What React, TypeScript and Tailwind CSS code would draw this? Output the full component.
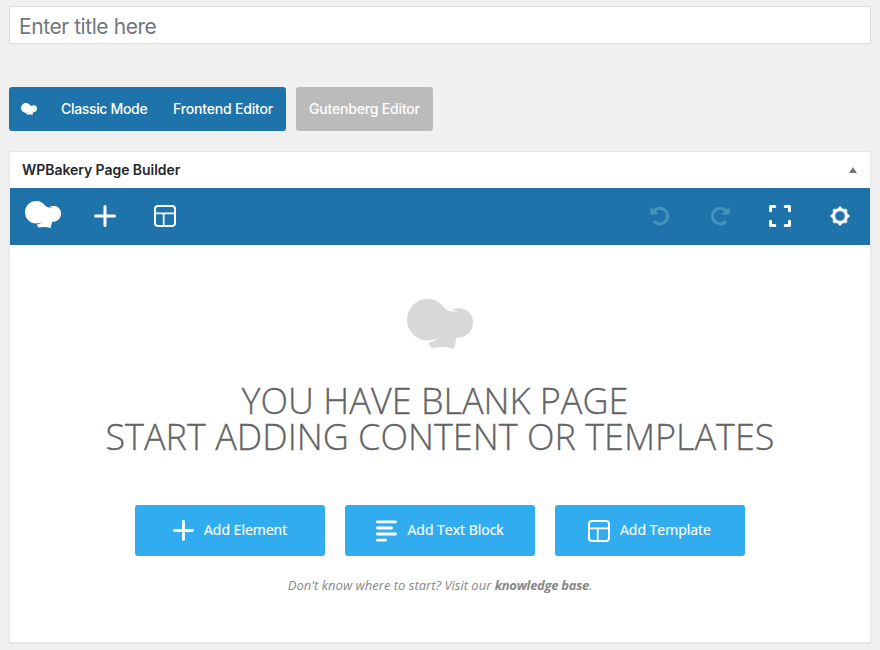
import React from "react";

type IconProps = { className?: string };

function Logo({ className }: IconProps) {
  return (
    <svg viewBox="50 41 198 149" preserveAspectRatio="none" fill="currentColor" className={className}>
      <path d="M50 103A62 62 0 0 1 112 41C135 41 149 52 158 63C166 73 176 80 204 78C198 75 191 74 182 74C194 69 206 68 213 69C234 71 248 89 248 111C248 137 228 157 199 156L191 190C169 183 149 183 126 187C121 183 117 178 114 172C126 169 138 164 147 156C136 162 124 165 112 165A62 62 0 0 1 50 103Z" />
    </svg>
  );
}

function Plus({ className }: IconProps) {
  return (
    <svg viewBox="0 0 22 22" stroke="currentColor" strokeWidth="3" strokeLinecap="round" className={className}>
      <path d="M11 1.5V20.5M1.5 11H20.5" />
    </svg>
  );
}

function Template({ className }: IconProps) {
  return (
    <svg viewBox="0 0 22 22" fill="none" stroke="currentColor" strokeWidth="2" className={className}>
      <rect x="1" y="1" width="20" height="20" rx="3" />
      <path d="M1 8.3H21M9.7 8.3V21" strokeWidth="1.7" />
    </svg>
  );
}

function TextLines({ className }: IconProps) {
  return (
    <svg viewBox="0 0 21 22" stroke="currentColor" strokeWidth="2.8" strokeLinecap="round" className={className}>
      <path d="M1.4 1.8H19.6M1.4 8H15.6M1.4 14H19.6M1.4 20.1H9.6" />
    </svg>
  );
}

function Undo({ className }: IconProps) {
  return (
    <svg viewBox="0 0 20 20" fill="none" className={className}>
      <path d="M4.3 4.6A7.8 7.8 0 1 1 4.8 16.1" stroke="currentColor" strokeWidth="3" strokeLinecap="round" />
      <path d="M1 2.2V7.8H7.4Z" fill="currentColor" stroke="currentColor" strokeWidth="1.2" strokeLinejoin="round" />
    </svg>
  );
}

function Fullscreen({ className }: IconProps) {
  return (
    <svg viewBox="0 0 22 22" fill="none" stroke="currentColor" strokeWidth="3" strokeLinecap="round" strokeLinejoin="round" className={className}>
      <path d="M1.5 5.8V1.5H5.8M16.2 1.5H20.5V5.8M20.5 16.2V20.5H16.2M5.8 20.5H1.5V16.2" />
    </svg>
  );
}

function Gear({ className }: IconProps) {
  return (
    <svg viewBox="0 0 20 20" fill="currentColor" className={className}>
      <path
        fillRule="evenodd"
        stroke="currentColor"
        strokeWidth=".8"
        strokeLinejoin="round"
        d="M10 .5L12.8 3.2L16.6 3.4L16.8 7.2L19.5 10L16.8 12.8L16.6 16.6L12.8 16.8L10 19.5L7.2 16.8L3.4 16.6L3.2 12.8L.5 10L3.2 7.2L3.4 3.4L7.2 3.2ZM10 4.7A5.3 5.3 0 1 0 10 15.3A5.3 5.3 0 0 0 10 4.7Z"
      />
    </svg>
  );
}

function ActionButton({ icon, children, className }: { icon: React.ReactNode; children: React.ReactNode; className: string }) {
  return (
    <button className={`flex h-[51px] w-[190px] items-center rounded-[3px] bg-[#31adef] text-[14px] text-white [-webkit-text-stroke:0.2px] ${className}`}>
      {icon}
      <span className="-mt-0.5 whitespace-nowrap">{children}</span>
    </button>
  );
}

export default function App() {
  return (
    <div className="h-[650px] w-[880px] overflow-hidden bg-[#f0f0f0] px-[9px] pt-1.5 font-['Inter',sans-serif]">
      <div className="flex h-[38px] w-[862px] items-center border border-[#dddddd] bg-white pt-[3px] pl-[9px] text-[21px] tracking-[-0.43px] text-[#72777c]">
        <span>Enter title here</span>
      </div>

      <div className="mt-[43px] flex h-11 gap-2.5 text-[14px] font-medium text-white">
        <div className="flex w-[277px] items-center rounded-[3px] bg-[#1e73aa] pb-px pl-3">
          <Logo className="h-3 w-4" />
          <span className="ml-6 w-[112px] tracking-[-0.33px] whitespace-nowrap">Classic Mode</span>
          <span className="tracking-[-0.18px] whitespace-nowrap">Frontend Editor</span>
        </div>
        <div className="flex w-[137px] items-center rounded-[3px] bg-[#bbbbbb] pb-px pl-[13px]">
          <span className="tracking-[-0.18px] whitespace-nowrap">Gutenberg Editor</span>
        </div>
      </div>

      <section className="mt-5 h-[492px] w-[862px] border border-[#e5e5e5] bg-white shadow-[0_1px_1px_rgba(0,0,0,0.04)]">
        <header className="flex h-9 items-center justify-between pr-[13.5px] pl-3 text-[14px] font-semibold text-[#23282d]">
          <span className="-mt-px tracking-[-0.05px]">WPBakery Page Builder</span>
          <svg viewBox="0 0 8 6" className="h-1.5 w-2 fill-[#72777c]">
            <path d="M4 0L8 6H0Z" />
          </svg>
        </header>

        <nav className="flex h-[57px] items-center bg-[#1e73aa] pr-5 pb-px pl-[15px] text-white">
          <Logo className="-mt-[3px] h-[27px] w-9" />
          <Plus className="ml-[33px] h-[22px] w-[22px]" />
          <Template className="ml-[38px] h-[22px] w-[22px]" />
          <Undo className="ml-auto h-5 w-5 text-[#4593bf]" />
          <Undo className="ml-10 h-5 w-5 -scale-x-100 text-[#4593bf]" />
          <Fullscreen className="ml-[39px] h-[22px] w-[22px]" />
          <Gear className="ml-[39px] h-5 w-5" />
        </nav>

        <main className="flex flex-col items-center pt-[54px] font-['Open_Sans',sans-serif]">
          <Logo className="h-[50px] w-[66px] text-[#d8d8d7]" />
          <h1 className="mt-[34px] flex flex-col items-center text-[36px] leading-9 font-light whitespace-nowrap text-[#646464] [-webkit-text-stroke:0.3px]">
            <span className="pr-2.5">YOU HAVE BLANK PAGE</span>
            <span>START ADDING CONTENT OR TEMPLATES</span>
          </h1>
          <div className="mt-[50px] flex gap-5">
            <ActionButton className="gap-[10px] pl-[38px]" icon={<Plus className="h-[21px] w-[21px]" />}>Add Element</ActionButton>
            <ActionButton className="gap-[10.5px] pl-[31px]" icon={<TextLines className="h-[22px] w-[21px]" />}>Add Text Block</ActionButton>
            <ActionButton className="gap-[10px] pl-[33px]" icon={<Template className="h-[22px] w-[22px]" />}>Add Template</ActionButton>
          </div>
          <p className="mt-[19px] text-[13px] leading-5 text-[#888888] italic">
            Don't know where to start? Visit our <b className="font-bold tracking-[-0.3px]">knowledge base</b>.
          </p>
        </main>
      </section>
    </div>
  );
}
